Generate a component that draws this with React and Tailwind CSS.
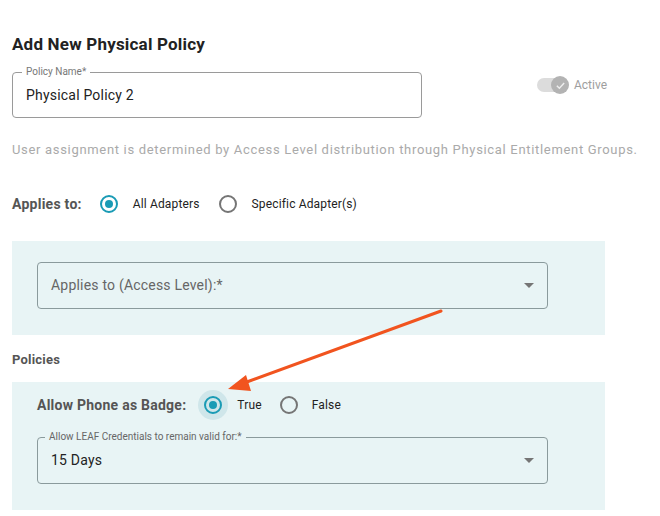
const Radio = ({ checked, halo = false }) => (
  <span className="relative flex h-[18px] w-[18px] items-center justify-center">
    {halo && <span className="absolute -inset-[6px] rounded-full bg-[#cfe6ea]" />}
    <span
      className={`relative flex h-[18px] w-[18px] items-center justify-center rounded-full border-2 ${
        checked ? 'border-[#1a9bb5]' : 'border-[#757575]'
      }`}
    >
      {checked && <span className="h-[8px] w-[8px] rounded-full bg-[#1a9bb5]" />}
    </span>
  </span>
)

const Caret = () => (
  <svg width="10" height="5" viewBox="0 0 10 5" className="mr-[13px]">
    <path d="M0 0 L10 0 L5 5 Z" fill="#757575" />
  </svg>
)

export default function App() {
  return (
    <div className="relative h-[516px] w-[660px] overflow-hidden bg-white font-['Roboto',sans-serif]">
      <div className="px-3 pt-[33px]">
        <h1 className="text-[17px] font-bold leading-[22px] tracking-[0.2px] text-[#222]">Add New Physical Policy</h1>

        <div className="mt-[17px] flex items-start">
          <div className="relative h-[46px] w-[410px] rounded-[4px] border border-[#9a9a9a]">
            <span className="absolute -top-[7px] left-[9px] bg-white px-[4px] text-[10px] leading-[12px] text-[#777]">
              Policy Name*
            </span>
            <div className="flex h-full items-center pl-[13px] text-[14px] tracking-[0.2px] text-[#222]">
              Physical Policy 2
            </div>
          </div>
          <div className="ml-[115px] mt-[4px] flex items-center">
            <span className="relative flex h-[14px] w-[32px] items-center">
              <span className="h-[14px] w-[30px] rounded-full bg-[#dcdcdc]" />
              <span className="absolute right-0 flex h-[18px] w-[18px] items-center justify-center rounded-full bg-[#b3b3b3]">
                <svg width="11" height="11" viewBox="0 0 12 12">
                  <path d="M2 6.3 L4.8 9 L10 3.4" fill="none" stroke="#eee" strokeWidth="1.6" />
                </svg>
              </span>
            </span>
            <span className="ml-[5px] text-[12px] text-[#9e9e9e]">Active</span>
          </div>
        </div>

        <p className="mt-[23px] whitespace-nowrap text-[13px] leading-[18px] tracking-[0.68px] text-[#aaa]">
          User assignment is determined by Access Level distribution through Physical Entitlement Groups.
        </p>

        <div className="mt-[36px] flex items-center text-[12px] leading-[16px] tracking-[0.15px]">
          <span className="text-[14px] font-bold tracking-[0.25px] text-[#555]">Applies to:</span>
          <span className="ml-[18px]"><Radio checked /></span>
          <span className="ml-[15px] text-[#222]">All Adapters</span>
          <span className="ml-[19px]"><Radio /></span>
          <span className="ml-[15px] text-[#222]">Specific Adapter(s)</span>
        </div>

        <div className="mt-[28px] w-[593px] bg-[#e8f4f5] px-[25px] pb-[26px] pt-[21px]">
          <div className="flex h-[47px] w-[511px] items-center justify-between rounded-[4px] border border-[#8a9a9c] pl-[13px]">
            <span className="text-[14px] tracking-[0.2px] text-[#666]">Applies to (Access Level):*</span>
            <Caret />
          </div>
        </div>

        <h2 className="mt-[17px] text-[13px] font-bold leading-[16px] tracking-[0.2px] text-[#555]">Policies</h2>

        <div className="mt-[14px] w-[593px] bg-[#e8f4f5] px-[25px] pb-[26px] pt-[14px]">
          <div className="flex items-center text-[12px] leading-[16px] tracking-[0.15px]">
            <span className="text-[14px] font-bold tracking-[0.25px] text-[#555]">Allow Phone as Badge:</span>
            <span className="ml-[18px]"><Radio checked halo /></span>
            <span className="ml-[15px] text-[#222]">True</span>
            <span className="ml-[18px]"><Radio /></span>
            <span className="ml-[14px] text-[#222]">False</span>
          </div>
          <div className="relative mt-[23px] flex h-[47px] w-[511px] items-center justify-between rounded-[4px] border border-[#8a9a9c] pl-[13px]">
            <span className="absolute -top-[7px] left-[7px] bg-[#e8f4f5] px-[4px] text-[10px] leading-[12px] text-[#666]">
              Allow LEAF Credentials to remain valid for:*
            </span>
            <span className="text-[14px] tracking-[0.2px] text-[#222]">15 Days</span>
            <Caret />
          </div>
        </div>
      </div>

      <svg className="pointer-events-none absolute left-0 top-0" width="660" height="516" viewBox="0 0 660 516">
        <line x1="441" y1="311" x2="244" y2="383" stroke="#f1541f" strokeWidth="3" strokeLinecap="round" />
        <path d="M228 389 L246 375 L251 391 Z" fill="#f1541f" />
      </svg>
    </div>
  )
}
